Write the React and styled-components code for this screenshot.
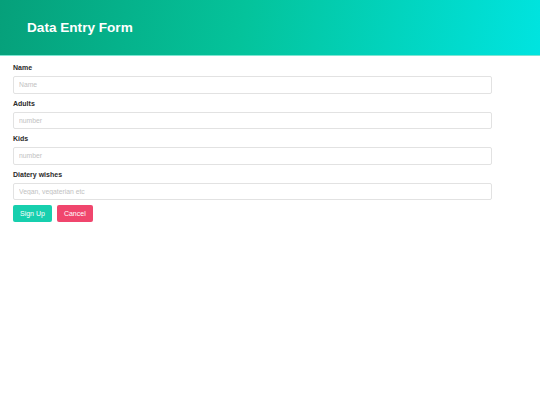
import React from 'react';
import styled, { createGlobalStyle } from 'styled-components';

const GlobalStyle = createGlobalStyle`
  html, body {
    margin: 0;
    padding: 0;
    background: #ffffff;
    font-family: "Liberation Sans", Arial, sans-serif;
  }
`;

const Header = styled.header`
  height: 56px;
  display: flex;
  align-items: center;
  padding: 0 27px;
  background: linear-gradient(100deg, #06a07a 0%, #04c39b 45%, #00e4e0 100%);
  border-bottom: 1px solid #7ee6d2;
  box-sizing: border-box;
`;

const Title = styled.h1`
  margin: 0;
  color: #ffffff;
  font-size: 13.6px;
  font-weight: bold;
`;

const Form = styled.form`
  display: flex;
  flex-direction: column;
  padding: 7px 13px 0;
  width: 479px;
`;

const Field = styled.div`
  display: flex;
  flex-direction: column;
  margin-bottom: 5px;
`;

const Label = styled.label`
  font-size: 7px;
  font-weight: bold;
  color: #2a2a2a;
  line-height: 9px;
  margin-bottom: 4px;
`;

const Input = styled.input`
  height: 17.5px;
  box-sizing: border-box;
  border: 1px solid #e2e2e2;
  border-radius: 2px;
  padding: 0 5px;
  font-family: "Liberation Sans", Arial, sans-serif;
  font-size: 6.8px;
  outline: none;
  &::placeholder {
    color: #c2c2c2;
  }
`;

const Actions = styled.div`
  display: flex;
  gap: 5px;
`;

const Button = styled.button`
  height: 17px;
  padding: 0 ${(p) => p.$pad}px;
  border: none;
  border-radius: 2px;
  color: #ffffff;
  font-family: "Liberation Sans", Arial, sans-serif;
  font-size: 7px;
  background: ${(p) => p.$color};
  cursor: pointer;
`;

const fields = [
  { label: 'Name', placeholder: 'Name' },
  { label: 'Adults', placeholder: 'number' },
  { label: 'Kids', placeholder: 'number' },
  { label: 'Diatery wishes', placeholder: 'Vegan, vegaterian etc' },
];

export default function App() {
  return (
    <>
      <GlobalStyle />
      <Header>
        <Title>Data Entry Form</Title>
      </Header>
      <Form onSubmit={(e) => e.preventDefault()}>
        {fields.map((f) => (
          <Field key={f.label}>
            <Label>{f.label}</Label>
            <Input type="text" placeholder={f.placeholder} />
          </Field>
        ))}
        <Actions>
          <Button type="submit" $color="#17cfae" $pad={7}>Sign Up</Button>
          <Button type="button" $color="#f0466d" $pad={7}>Cancel</Button>
        </Actions>
      </Form>
    </>
  );
}
